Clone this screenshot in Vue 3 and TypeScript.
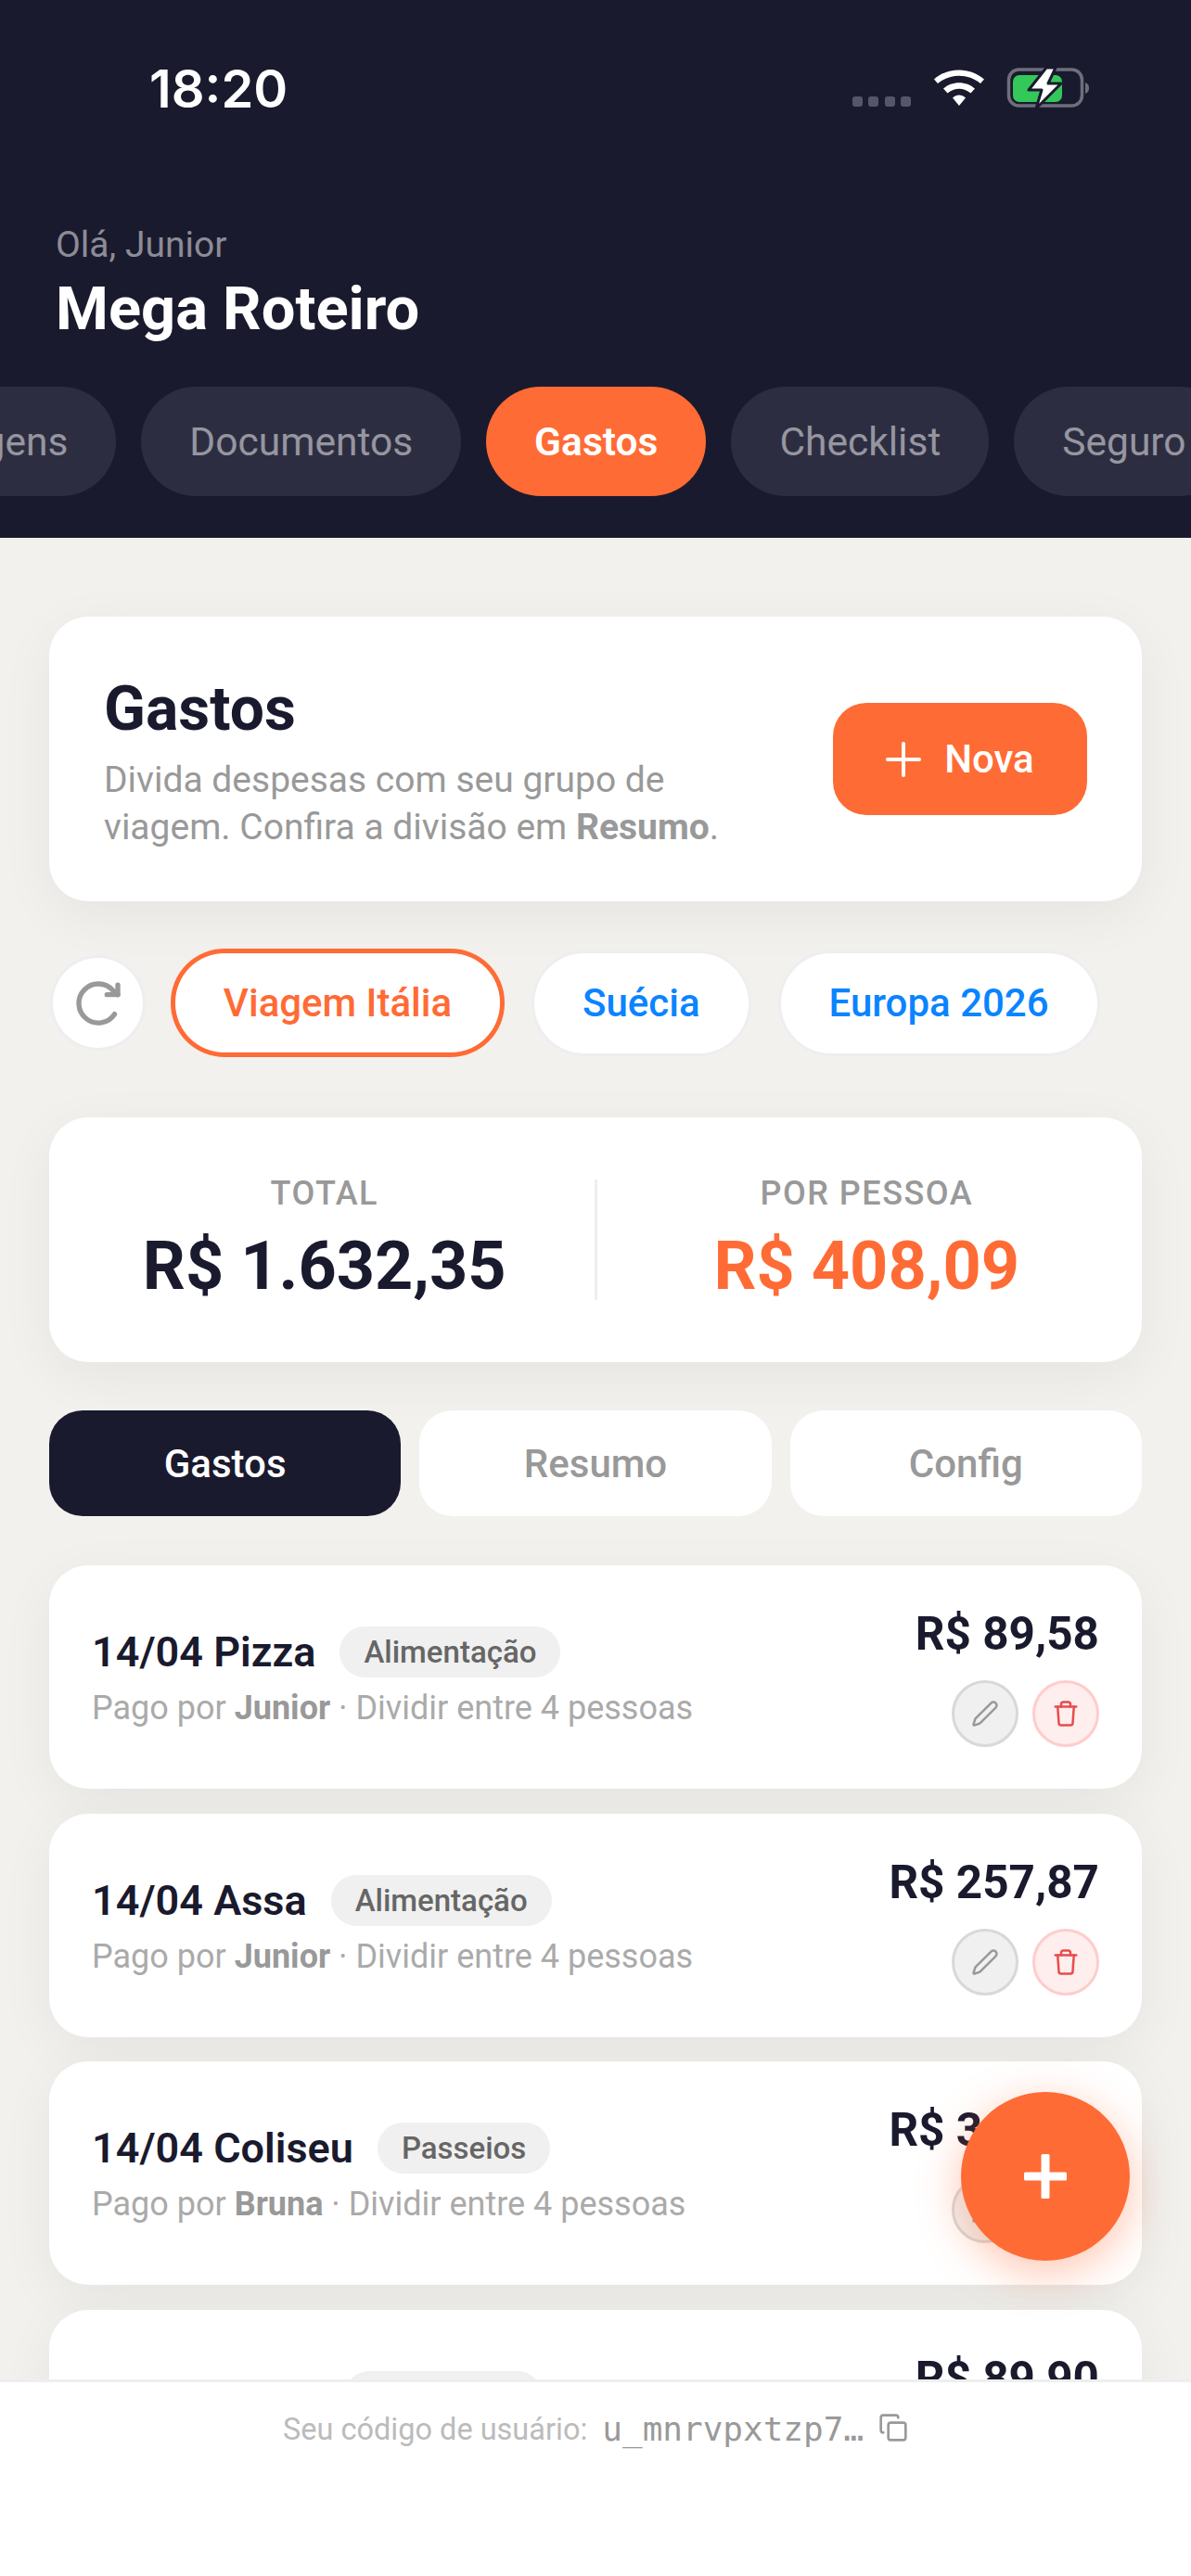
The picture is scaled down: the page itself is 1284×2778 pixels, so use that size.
<script setup lang="ts">
interface Expense {
  title: string
  tag: string
  payer: string
  price: string
}

const topTabs = ['Viagens', 'Documentos', 'Gastos', 'Checklist', 'Seguro']
const trips = ['Viagem Itália', 'Suécia', 'Europa 2026']
const subTabs = ['Gastos', 'Resumo', 'Config']
const expenses: Expense[] = [
  { title: '14/04 Pizza', tag: 'Alimentação', payer: 'Junior', price: 'R$ 89,58' },
  { title: '14/04 Assa', tag: 'Alimentação', payer: 'Junior', price: 'R$ 257,87' },
  { title: '14/04 Coliseu', tag: 'Passeios', payer: 'Bruna', price: 'R$ 300,00' },
  { title: '14/04 Piano', tag: 'Transporte', payer: 'Junior', price: 'R$ 89,90' }
]
</script>

<template>
  <div class="screen">
    <header class="hero">
      <div class="status">
        <span class="time">18:20</span>
        <svg class="status-icons" width="256" height="46" viewBox="0 0 256 46">
          <g fill="#55566a">
            <rect x="0" y="31" width="11" height="11" rx="3" />
            <rect x="17" y="31" width="11" height="11" rx="3" />
            <rect x="35" y="31" width="11" height="11" rx="3" />
            <rect x="52" y="31" width="11" height="11" rx="3" />
          </g>
          <g fill="#fff">
            <path d="M88 12.500C103 -1 127 -1 142 12.500L138 17C125 6 105 6 92 17Z" />
            <path d="M98 22.500C107 14 123 14 132 22.500L127.500 27.500C120 21 110 21 102.500 27.500Z" />
            <path d="M108 32.500C112 28.500 118 28.500 122 32.500L115 41Z" />
          </g>
          <rect x="168.500" y="2" width="79" height="39" rx="11" fill="none" stroke="#6e6f7c" stroke-width="3.500" />
          <path d="M251 16c3 1 4 3 4 6s-1 5-4 6z" fill="#6e6f7c" />
          <rect x="173" y="8" width="53" height="29" rx="7" fill="#34c759" />
          <path d="M209 0 190 24h14l-6 20 27-27h-14l8-17z" fill="#fff" stroke="#1a1a2e" stroke-width="3" stroke-linejoin="round" />
        </svg>
      </div>
      <p class="hello">Olá, Junior</p>
      <h1 class="brand">Mega Roteiro</h1>
      <nav class="top-tabs">
        <span v-for="tab in topTabs" :key="tab" class="top-tab" :class="{ on: tab === 'Gastos' }">{{ tab }}</span>
      </nav>
    </header>

    <main class="content">
      <section class="card intro">
        <div class="intro-text">
          <h2>Gastos</h2>
          <p>Divida despesas com seu grupo de viagem. Confira a divisão em <b>Resumo</b>.</p>
        </div>
        <button class="new-btn">
          <svg width="38" height="38" viewBox="0 0 38 38" fill="none" stroke="#fff" stroke-width="4" stroke-linecap="round">
            <path d="M19 2v34M2 19h34" />
          </svg>
          <span>Nova</span>
        </button>
      </section>

      <div class="trips">
        <button class="refresh" aria-label="Atualizar">
          <svg width="56" height="56" viewBox="0 0 24 24" fill="none" stroke="#999" stroke-width="2.300" stroke-linecap="round" stroke-linejoin="round">
            <path d="M19.500 17A9 9 0 1 1 18.700 6L21 8" />
            <path d="M21 3.500V8h-5" />
          </svg>
        </button>
        <button v-for="(trip, i) in trips" :key="trip" class="trip" :class="{ on: i === 0 }">{{ trip }}</button>
      </div>

      <section class="card totals">
        <div class="total-col">
          <span class="total-label">TOTAL</span>
          <strong class="total-value">R$ 1.632,35</strong>
        </div>
        <div class="divider"></div>
        <div class="total-col">
          <span class="total-label">POR PESSOA</span>
          <strong class="total-value accent">R$ 408,09</strong>
        </div>
      </section>

      <div class="sub-tabs">
        <button v-for="(tab, i) in subTabs" :key="tab" class="sub-tab" :class="{ on: i === 0 }">{{ tab }}</button>
      </div>

      <ul class="list">
        <li v-for="(item, i) in expenses" :key="i" class="card expense">
          <div class="expense-main">
            <div class="expense-head">
              <span class="expense-title">{{ item.title }}</span>
              <span class="tag">{{ item.tag }}</span>
            </div>
            <p class="expense-sub">Pago por <b>{{ item.payer }}</b> · Dividir entre 4 pessoas</p>
          </div>
          <div class="expense-side">
            <span class="price">{{ item.price }}</span>
            <div class="actions">
              <button class="round edit" aria-label="Editar">
                <svg width="30" height="30" viewBox="0 0 24 24" fill="none" stroke="#999" stroke-width="2" stroke-linecap="round" stroke-linejoin="round">
                  <path d="M21.174 6.812a1 1 0 0 0-3.986-3.987L3.842 16.174a2 2 0 0 0-.5.83l-1.321 4.352a.5.5 0 0 0 .623.622l4.353-1.32a2 2 0 0 0 .83-.497z" />
                </svg>
              </button>
              <button class="round del" aria-label="Excluir">
                <svg width="30" height="30" viewBox="0 0 24 24" fill="none" stroke="#e84c4c" stroke-width="2" stroke-linecap="round" stroke-linejoin="round">
                  <path d="M3 6h18" />
                  <path d="M19 6l-1 14a2 2 0 0 1-2 2H8a2 2 0 0 1-2-2L5 6" />
                  <path d="M8 6V4a2 2 0 0 1 2-2h4a2 2 0 0 1 2 2v2" />
                </svg>
              </button>
            </div>
          </div>
        </li>
      </ul>
    </main>

    <button class="fab" aria-label="Adicionar">
      <svg width="46" height="48" viewBox="0 0 46 48" fill="#fff">
        <rect x="18.500" y="0" width="9" height="48" rx="1.500" />
        <rect x="0" y="19.500" width="46" height="9" rx="1.500" />
      </svg>
    </button>

    <footer class="foot">
      <span class="foot-label">Seu código de usuário:</span>
      <span class="foot-code">u_mnrvpxtzp7…</span>
      <svg class="foot-copy" width="32" height="32" viewBox="0 0 24 24" fill="none" stroke="#999" stroke-width="2" stroke-linecap="round" stroke-linejoin="round">
        <rect x="8" y="8" width="14" height="14" rx="2" />
        <path d="M4 16c-1.100 0-2-.9-2-2V4c0-1.100.9-2 2-2h10c1.100 0 2 .9 2 2" />
      </svg>
    </footer>
  </div>
</template>

<style scoped>
.screen {
  position: relative;
  width: 1284px;
  height: 2778px;
  overflow: hidden;
  display: flex;
  flex-direction: column;
  background: #f2f1ee;
  font-family: Roboto, "Liberation Sans", sans-serif;
}
button {
  font-family: inherit;
  border: none;
  padding: 0;
  cursor: pointer;
}
.hero {
  height: 580px;
  flex: none;
  box-sizing: border-box;
  background: #1a1a2e;
  padding-top: 65px;
  overflow: hidden;
}
.status {
  height: 62px;
  display: flex;
  align-items: center;
  justify-content: space-between;
  padding: 0 109px 0 161px;
}
.time {
  font-family: Inter, sans-serif;
  font-weight: 600;
  font-size: 56px;
  color: #fff;
}
.hello {
  margin: 114px 0 0 60px;
  font-size: 39px;
  line-height: 46px;
  color: rgba(255, 255, 255, 0.5);
}
.brand {
  margin: 8px 0 0 60px;
  font-size: 65px;
  line-height: 76px;
  font-weight: 700;
  color: #fff;
}
.top-tabs {
  margin: 46px 0 0 -131px;
  display: flex;
  gap: 27px;
}
.top-tab {
  flex: none;
  height: 118px;
  padding: 0 52px;
  display: flex;
  align-items: center;
  border-radius: 59px;
  background: #2d2d41;
  color: rgba(255, 255, 255, 0.5);
  font-size: 42.500px;
  font-weight: 400;
}
.top-tab.on {
  background: #ff6b35;
  color: #fff;
  font-weight: 600;
}
.content {
  flex: 1;
  min-height: 0;
  overflow: hidden;
  padding: 85px 53px 0;
}
.card {
  background: #fff;
  border-radius: 42px;
  box-shadow: 0 15px 60px rgba(0, 0, 0, 0.055);
}
.intro {
  height: 307px;
  box-sizing: border-box;
  padding: 0 59px;
  display: flex;
  align-items: center;
  justify-content: space-between;
}
.intro-text {
  width: 680px;
  padding-top: 6px;
}
.intro h2 {
  margin: 0;
  font-size: 66px;
  line-height: 78px;
  font-weight: 700;
  color: #1a1a2e;
}
.intro p {
  margin: 12px 0 0;
  font-size: 39px;
  line-height: 51px;
  color: #999;
}
.intro b {
  font-weight: 700;
}
.new-btn {
  width: 274px;
  height: 121px;
  border-radius: 36px;
  background: #ff6b35;
  color: #fff;
  font-size: 42px;
  font-weight: 500;
  display: flex;
  align-items: center;
  justify-content: center;
  gap: 25px;
}
.trips {
  margin-top: 51px;
  height: 117px;
  display: flex;
  align-items: center;
  gap: 35px;
  padding-left: 4px;
}
.refresh {
  width: 97px;
  height: 97px;
  flex: none;
  border-radius: 50%;
  background: #fff;
  box-shadow: 0 0 0 3px #eeeef0;
  display: flex;
  align-items: center;
  justify-content: center;
}
.trip {
  height: 108px;
  padding: 0 52px;
  border-radius: 54px;
  background: #fff;
  box-shadow: 0 0 0 3px #eeeef0;
  color: #0a84ff;
  font-size: 42px;
  font-weight: 500;
}
.trip.on {
  height: 117px;
  width: 360px;
  margin: 0 -3px 0 -5px;
  padding: 0;
  border-radius: 58px;
  box-shadow: inset 0 0 0 5px #ff6b35;
  color: #ff6b35;
}
.totals {
  margin-top: 65px;
  height: 264px;
  box-sizing: border-box;
  padding: 0 6px;
  display: flex;
  align-items: center;
}
.total-col {
  flex: 1;
  display: flex;
  flex-direction: column;
  align-items: center;
  gap: 16px;
}
.total-label {
  font-size: 36px;
  line-height: 42px;
  color: #999;
  letter-spacing: 1.500px;
  font-weight: 500;
}
.total-value {
  font-size: 72px;
  line-height: 84px;
  font-weight: 700;
  color: #1a1a2e;
}
.accent {
  color: #ff6b35;
}
.divider {
  width: 3px;
  height: 130px;
  background: #eeeeee;
}
.sub-tabs {
  margin-top: 52px;
  display: flex;
  gap: 20px;
}
.sub-tab {
  flex: 1;
  height: 114px;
  border-radius: 36px;
  background: #fff;
  color: #999;
  font-size: 42px;
  font-weight: 500;
}
.sub-tab.on {
  background: #1a1a2e;
  color: #fff;
}
.list {
  list-style: none;
  margin: 53px 0 0;
  padding: 0;
  display: flex;
  flex-direction: column;
  gap: 26.500px;
}
.expense {
  height: 241px;
  flex: none;
  box-sizing: border-box;
  padding: 0 46px;
  display: flex;
  align-items: center;
  justify-content: space-between;
}
.expense-head {
  display: flex;
  align-items: center;
  gap: 26px;
}
.expense-title {
  font-size: 45px;
  font-weight: 600;
  color: #1a1a2e;
}
.tag {
  height: 55px;
  padding: 0 26px;
  display: flex;
  align-items: center;
  border-radius: 28px;
  background: #f0f0f0;
  color: #666;
  font-size: 33px;
  font-weight: 500;
}
.expense-sub {
  margin: 12px 0 0;
  font-size: 36px;
  line-height: 42px;
  color: #aaa;
}
.expense-sub b {
  font-weight: 700;
  color: #999;
}
.expense-side {
  display: flex;
  flex-direction: column;
  align-items: flex-end;
  gap: 21px;
}
.price {
  font-size: 49.500px;
  line-height: 58px;
  font-weight: 700;
  color: #1a1a2e;
}
.actions {
  display: flex;
  gap: 15px;
}
.round {
  width: 72px;
  height: 72px;
  box-sizing: border-box;
  border-radius: 50%;
  display: flex;
  align-items: center;
  justify-content: center;
}
.edit {
  background: #f0f0f0;
  border: 3px solid #d8d8d8;
}
.del {
  background: #ffeeee;
  border: 3px solid #fcc;
}
.fab {
  position: absolute;
  left: 1036px;
  top: 2256px;
  width: 182px;
  height: 182px;
  border-radius: 50%;
  background: #ff6b35;
  box-shadow: 0 12px 48px rgba(255, 107, 53, 0.4);
  display: flex;
  align-items: center;
  justify-content: center;
}
.foot {
  position: absolute;
  left: 0;
  right: 0;
  bottom: 0;
  height: 212px;
  box-sizing: border-box;
  padding-top: 30px;
  background: #fff;
  border-top: 3px solid #eeeeee;
  display: flex;
  align-items: flex-start;
  justify-content: center;
  gap: 16px;
}
.foot-label {
  font-size: 32.500px;
  line-height: 42px;
  color: #bbb;
}
.foot-code {
  font-family: "DejaVu Sans Mono", "Liberation Mono", monospace;
  font-size: 36px;
  line-height: 42px;
  color: #999;
}
.foot-copy {
  margin-top: 3px;
}
</style>
